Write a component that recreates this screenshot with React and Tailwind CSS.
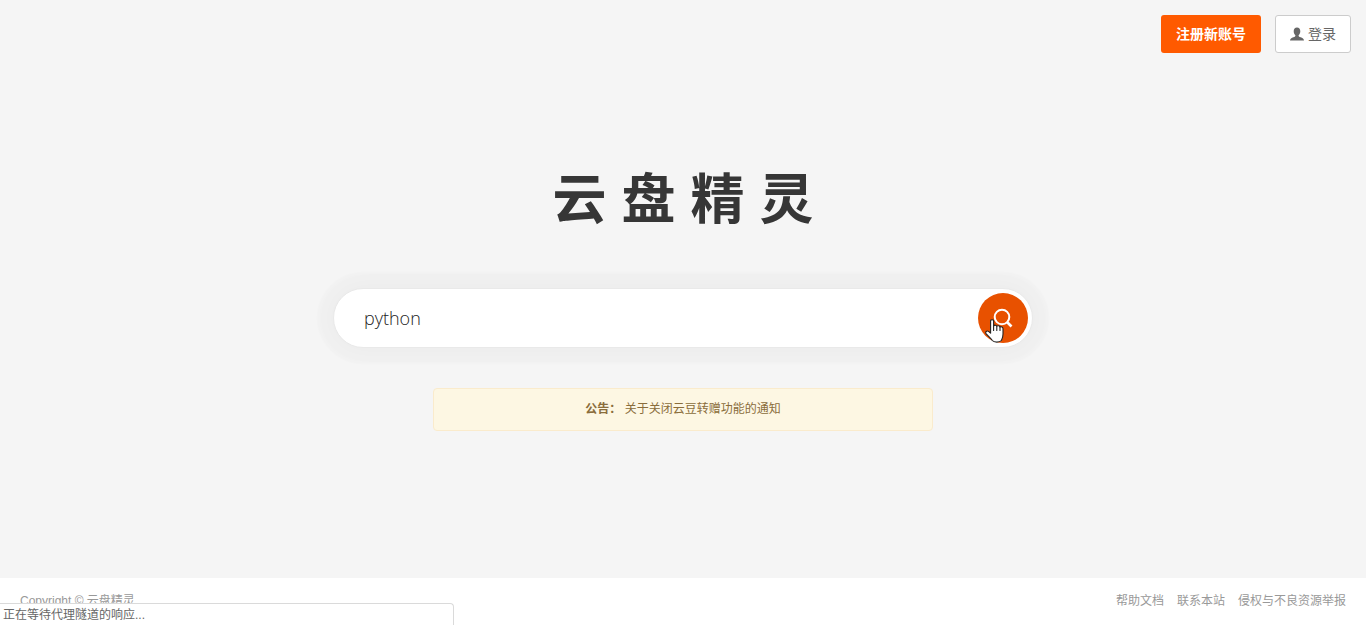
import React, { useState } from 'react';

const notice = { label: '公告：', title: '关于关闭云豆转赠功能的通知' };

const footerLinks = ['帮助文档', '联系本站', '侵权与不良资源举报'];

const App = () => {
  const [keyword, setKeyword] = useState('python');

  const handleSubmit = (e) => {
    e.preventDefault();
  };

  return (
    <div className="flex min-h-screen flex-col bg-[#f5f5f5] font-['Liberation_Sans','Noto_Sans_CJK_SC',sans-serif] text-[#666]">
      <header className="flex justify-end gap-3.5 p-[15px]">
        <button
          type="button"
          className="h-[38px] rounded-[3px] bg-[#ff5a00] px-[15px] text-sm font-bold text-white"
        >
          注册新账号
        </button>
        <button
          type="button"
          className="flex h-[38px] items-center gap-1 rounded-[3px] border border-[#ccc] bg-white px-3.5 text-sm"
        >
          <UserIcon />
          登录
        </button>
      </header>

      <main className="flex flex-1 flex-col items-center px-4 pt-[92px]">
        <h1 className="text-[54px] leading-20 font-bold whitespace-nowrap text-[#363636]">云 盘 精 灵</h1>

        <form
          onSubmit={handleSubmit}
          className="mt-12 flex h-[60px] w-full max-w-[700px] items-center rounded-full border border-[#e9e9e9] bg-white pr-1 pl-[30px] shadow-[0_0_2px_16px_rgba(0,0,0,0.015),0_0_24px_rgba(0,0,0,0.03)]"
        >
          <input
            type="text"
            aria-label="搜索"
            value={keyword}
            onChange={(e) => setKeyword(e.target.value)}
            className="min-w-0 flex-1 bg-transparent font-['Open_Sans',sans-serif] text-lg font-light text-[#222] outline-none"
          />
          <button
            type="submit"
            aria-label="搜索"
            className="relative flex size-[50px] items-center justify-center rounded-full bg-[#e85100]"
          >
            <SearchIcon />
            <HandPointer />
          </button>
        </form>

        <div className="mt-10 w-full max-w-[500px] rounded-sm border border-[#faebcc] bg-[#fdf7e3] px-4 pt-[11px] pb-3 text-center text-xs leading-[18px] text-[#8a6d3b]">
          <a href="#notice">
            <strong>{notice.label}</strong> {notice.title}
          </a>
        </div>
      </main>

      <footer className="flex h-[47px] items-center justify-between bg-white px-5 pb-0.5 text-xs text-[#999]">
        <p>Copyright © 云盘精灵</p>
        <nav className="flex gap-[13px]">
          {footerLinks.map((link) => (
            <a key={link} href="#footer">{link}</a>
          ))}
        </nav>
      </footer>

      {/* browser status bubble */}
      <div className="fixed bottom-0 left-0 h-[22px] w-[454px] rounded-tr border-t border-r border-[#dadada] bg-white pl-[3px] text-xs leading-[22px] text-[#666]">
        正在等待代理隧道的响应...
      </div>
    </div>
  );
};

const UserIcon = () => (
  <svg width="14" height="14" viewBox="0 0 14 14" fill="#666" aria-hidden="true">
    <path d="M7 0.5C4.9 0.5 3.7 2 3.7 4.2C3.7 5.9 4.4 7.4 5.4 8.2C5.4 9.2 5.1 9.6 4.2 10C2 10.8 0 11.4 0 13.5H14C14 11.4 12 10.8 9.8 10C8.9 9.6 8.6 9.2 8.6 8.2C9.6 7.4 10.3 5.9 10.3 4.2C10.3 2 9.1 0.5 7 0.5Z" />
  </svg>
);

const SearchIcon = () => (
  <svg width="20" height="20" viewBox="0 0 20 20" fill="none" stroke="#fff" strokeWidth="2" aria-hidden="true">
    <circle cx="9" cy="9" r="7.3" />
    <path d="M14 14L18.5 18.5" strokeWidth="2.6" />
  </svg>
);

const HandPointer = () => (
  <svg
    className="absolute top-[26px] left-[7px]"
    width="19"
    height="24"
    viewBox="0 0 19 24"
    fill="#fff"
    stroke="#222"
    strokeWidth="1.1"
    strokeLinejoin="round"
    strokeLinecap="round"
    aria-hidden="true"
  >
    <path d="M5.6 2C5.6 0.3 8.6 0.3 8.6 2V6.8C9.4 5.8 11.4 6 11.8 7.2C12.8 6.3 14.6 6.8 15 8C16.4 7.4 18 8.2 18 9.8V15C18 18.5 17 20 16.3 21.5C14.5 23.6 9 23.6 7.3 21.5C6 19.5 3.5 17.5 1.2 14.8C-0.2 12.8 1.8 11.4 3.5 12.4L5.6 14.2Z" />
    <path d="M8.6 6.8V11.5M11.8 7.3V11.5M15 8V11.5" />
  </svg>
);

export default App;
